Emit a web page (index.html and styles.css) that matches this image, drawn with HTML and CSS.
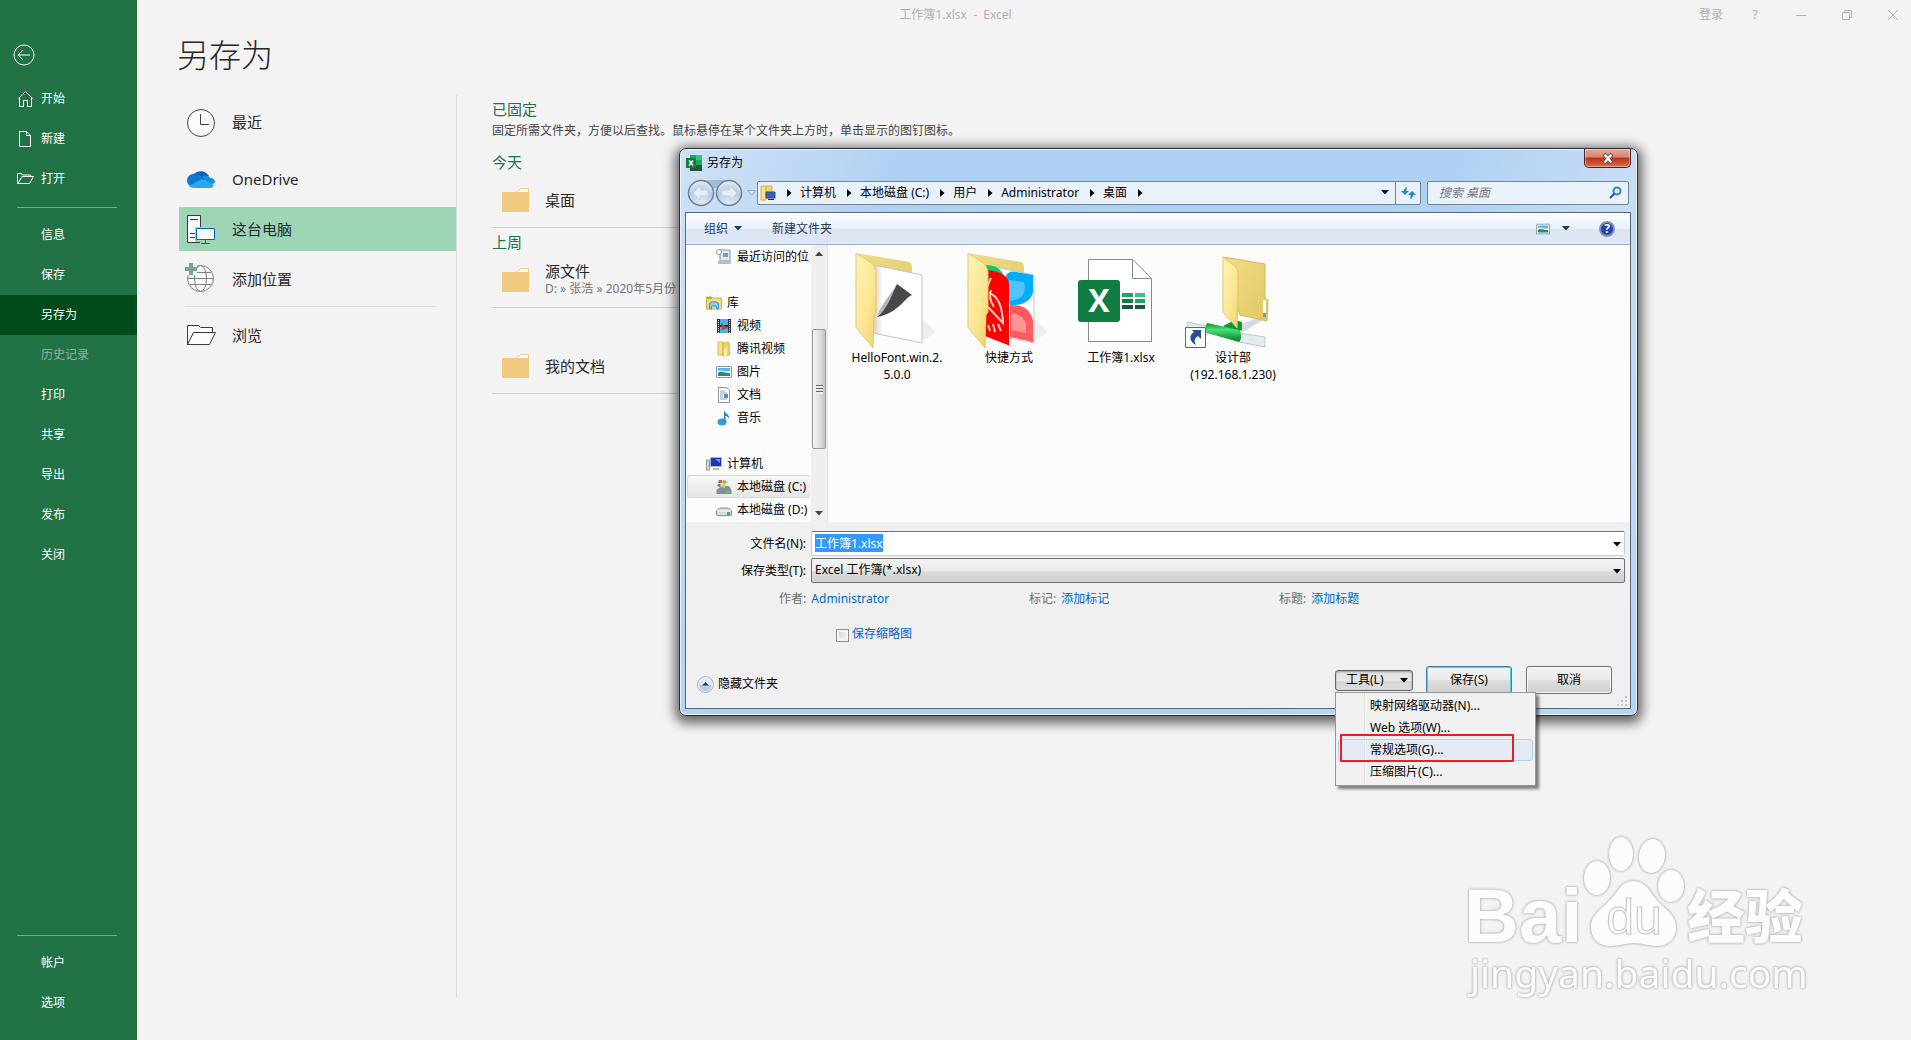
FILE: index.html
```html
<!DOCTYPE html>
<html lang="zh-CN">
<head>
    <meta charset="UTF-8">
    <meta name="viewport" content="width=device-width, initial-scale=1.0">
    <title>工作簿1.xlsx - Excel</title>
    <link rel="stylesheet" href="styles.css">
</head>
<body>
    <!-- Shared icons -->
    <svg class="defs" width="0" height="0">
        <defs>
            <linearGradient id="flap" x1="0" y1="0" x2="1" y2="1">
                <stop offset="0" stop-color="#fff3b8"/>
                <stop offset="0.6" stop-color="#fbe690"/>
                <stop offset="1" stop-color="#efd06a"/>
            </linearGradient>
            <linearGradient id="folderBack" x1="0" y1="0" x2="1" y2="1">
                <stop offset="0" stop-color="#f0dc88"/>
                <stop offset="1" stop-color="#e3c765"/>
            </linearGradient>
            <linearGradient id="paper" x1="0" y1="0" x2="1" y2="0">
                <stop offset="0" stop-color="#d6ccba"/>
                <stop offset="0.2" stop-color="#ffffff"/>
            </linearGradient>
            <linearGradient id="pipe" x1="0" y1="0" x2="0" y2="1">
                <stop offset="0" stop-color="#0b8a2f"/>
                <stop offset="0.35" stop-color="#4be07a"/>
                <stop offset="1" stop-color="#057a25"/>
            </linearGradient>
            <radialGradient id="orb" cx="0.5" cy="0.9" r="0.9">
                <stop offset="0" stop-color="#dfeaf5"/>
                <stop offset="0.6" stop-color="#b9cee3"/>
                <stop offset="1" stop-color="#e8f0f8"/>
            </radialGradient>
            <symbol id="i-down" viewBox="0 0 8 5"><path d="M0 0h8L4 4.500z" fill="currentColor"/></symbol>
            <symbol id="i-right" viewBox="0 0 5 8"><path d="M0 0v8L4.500 4z" fill="currentColor"/></symbol>
            <symbol id="i-folder" viewBox="0 0 28 26">
                <path d="M14 5l5-3.500h7.500V6H14z" fill="#fff" stroke="#efc980"/>
                <path d="M0 5h27v20H0z" fill="#efc980"/>
            </symbol>
            <symbol id="i-picture" viewBox="0 0 16 16">
                <path d="M.5 2.500h15v11H.5z" fill="#fff" stroke="#8a97a5"/>
                <path d="M2 4h12v4H2z" fill="#57b4ee"/>
                <path d="M2 7c3-2 5 1 12 0v3H2z" fill="#dff0e8"/>
                <path d="M2 9c4-3 7 1 12 0v3H2z" fill="#2c8a72"/>
            </symbol>
            <symbol id="i-smallfolder" viewBox="0 0 16 16">
                <path d="M2 1h5v13H2z" fill="#f7e08b" stroke="#dcb94f"/>
                <path d="M7 2l6-.5.500 12.500L7 15z" fill="#f0d06a" stroke="#d9b24a"/>
                <path d="M8 8l3-2v9H8z" fill="#fbeeb0"/>
            </symbol>
        </defs>
    </svg>

    <nav class="sidebar">
        <button class="back-btn" aria-label="返回">
            <svg width="22" height="22" viewBox="0 0 22 22" fill="none" stroke="#fff"><circle cx="11" cy="11" r="10"/><path d="M17 11H5M10 6l-5 5 5 5"/></svg>
        </button>
        <a class="nav-item" href="#">
            <svg class="nav-icon" viewBox="0 0 18 18" fill="none" stroke="#fff"><path d="M1 9l7.500-7.500L16 9M2.500 8v8.500h4v-6h4v6h4V8"/></svg>开始</a>
        <a class="nav-item" href="#">
            <svg class="nav-icon" viewBox="0 0 18 18" fill="none" stroke="#fff"><path d="M2.500 1.500h7l4 4v11h-11zM9.500 1.500v4h4"/></svg>新建</a>
        <a class="nav-item" href="#">
            <svg class="nav-icon" viewBox="0 0 18 18" fill="none" stroke="#fff"><path d="M.5 13.500V3.500h4l1 1.500h8v1.500M1 13.500L5 6.500h11.500l-4 7z"/></svg>打开</a>
        <hr>
        <a class="nav-item text-only" href="#">信息</a>
        <a class="nav-item text-only" href="#">保存</a>
        <a class="nav-item text-only active" href="#">另存为</a>
        <a class="nav-item text-only disabled" href="#">历史记录</a>
        <a class="nav-item text-only" href="#">打印</a>
        <a class="nav-item text-only" href="#">共享</a>
        <a class="nav-item text-only" href="#">导出</a>
        <a class="nav-item text-only" href="#">发布</a>
        <a class="nav-item text-only" href="#">关闭</a>
        <div class="nav-bottom">
            <hr>
            <a class="nav-item text-only" href="#">帐户</a>
            <a class="nav-item text-only" href="#">选项</a>
        </div>
    </nav>

    <main class="main">
        <header class="app-titlebar">
            <span class="app-title">工作簿1.xlsx&nbsp; -&nbsp; Excel</span>
            <div class="window-controls">
                <a class="login" href="#">登录</a>
                <button aria-label="帮助">?</button>
                <button aria-label="最小化"><svg width="12" height="12" viewBox="0 0 12 12" fill="none" stroke="#b1b1b1"><path d="M1 6.500h10"/></svg></button>
                <button aria-label="还原"><svg width="12" height="12" viewBox="0 0 12 12" fill="none" stroke="#b1b1b1"><path d="M1.500 3.500h7v7h-7zM3.500 3.500v-2h7v7h-2"/></svg></button>
                <button aria-label="关闭窗口"><svg width="12" height="12" viewBox="0 0 12 12" fill="none" stroke="#b1b1b1"><path d="M1 1l10 10M11 1L1 11"/></svg></button>
            </div>
        </header>

        <h1>另存为</h1>

        <div class="columns">
            <div class="places">
                <a class="place first" href="#">
                    <svg width="32" height="32" viewBox="0 0 32 32" fill="none" stroke="#444"><circle cx="16" cy="17" r="13.500" fill="#fafafa"/><path d="M15.500 8v10.500H24"/></svg>
                    最近</a>
                <a class="place" href="#">
                    <svg width="32" height="32" viewBox="0 0 32 32">
                        <path d="M9 11a9 8 0 0 1 15 2l-6 5z" fill="#0364b8"/>
                        <path d="M8 24a6 6.500 0 0 1 0-13c3-1 6 1 9 3l4 8z" fill="#0f78d4"/>
                        <path d="M17 14c4-3 7-1 8 1 4 0 5 2 5 5l-6 2z" fill="#1490df"/>
                        <path d="M4 23l13-7 12 6c-1 2-2 3-4 3H9c-2 0-4-1-5-2z" fill="#28a8ea"/>
                    </svg>
                    OneDrive</a>
                <a class="place selected" href="#">
                    <svg width="32" height="32" viewBox="0 0 32 32" fill="none">
                        <path d="M2.500 2.500h13v27h-13z" fill="#fafafa" stroke="#3a3a3a"/><path d="M5 6.500h8M5 20.500h5M5 24.500h5" stroke="#3a3a3a"/>
                        <path d="M10 14h21v18H15v-3h-5z" fill="#9fd5b7"/>
                        <path d="M11.500 15.500h18v11h-18z" fill="#fafafa" stroke="#0364b8"/><path d="M20.500 27v3M16 30.500h9" stroke="#0364b8"/>
                    </svg>
                    这台电脑</a>
                <a class="place" href="#">
                    <svg width="32" height="32" viewBox="0 0 32 32" fill="none" stroke="#808080">
                        <circle cx="15.500" cy="15.500" r="13" fill="#fafafa"/><ellipse cx="15.500" cy="15.500" rx="6" ry="13"/><path d="M2.500 15.500h26M5 9.500h21M5 21.500h21"/>
                        <path d="M0 0h12v12H0z" fill="#f3f3f3" stroke="none"/>
                        <path d="M6 0v12M0 6h12" stroke="#73a896" stroke-width="4"/>
                    </svg>
                    添加位置</a>
                <hr>
                <a class="place" href="#">
                    <svg width="32" height="32" viewBox="0 0 32 32" fill="#fafafa" stroke="#3a3a3a"><path d="M2.500 26V6.500h11l2 2h12v5"/><path d="M2.500 25.500l6-12h22l-6 12z"/></svg>
                    浏览</a>
            </div>

            <div class="recent">
                <h2>已固定</h2>
                <p class="hint">固定所需文件夹，方便以后查找。鼠标悬停在某个文件夹上方时，单击显示的图钉图标。</p>
                <h2>今天</h2>
                <a class="folder-row" href="#">
                    <svg width="28" height="26"><use href="#i-folder"/></svg>
                    <span>桌面</span></a>
                <h2>上周</h2>
                <a class="folder-row" href="#">
                    <svg width="28" height="26"><use href="#i-folder"/></svg>
                    <span>源文件<small>D: » 张浩 » 2020年5月份</small></span></a>
                <a class="folder-row spaced" href="#">
                    <svg width="28" height="26"><use href="#i-folder"/></svg>
                    <span>我的文档</span></a>
            </div>
        </div>
    </main>

    <div class="dialog" role="dialog" aria-labelledby="dialogTitle">
        <div class="dialog-title">
            <svg width="16" height="16" viewBox="0 0 16 16">
                <path d="M4 0h6v5H4z" fill="#21a366"/><path d="M10 0h6v5h-6z" fill="#33c481"/>
                <path d="M4 5h6v5H4z" fill="#107c41"/><path d="M10 5h6v5h-6z" fill="#21a366"/><path d="M4 10h12v6H4z" fill="#185c37"/>
                <path d="M0 3h10v10H0z" fill="#107c41"/><path d="M3 5.500l4 5M7 5.500l-4 5" stroke="#fff" stroke-width="1.500"/>
            </svg>
            <span id="dialogTitle">另存为</span>
            <button class="close-btn" aria-label="关闭">
                <svg width="12" height="11" viewBox="0 0 12 11"><path d="M2 1l8 9M10 1L2 10" stroke="#5b3a3a" stroke-width="4"/><path d="M2.500 1.500l7 8M9.500 1.500l-7 8" stroke="#fff" stroke-width="2.500"/></svg>
            </button>
        </div>

        <div class="address-row">
            <div class="travel">
                <svg width="56" height="28" viewBox="0 0 56 28">
                    <path d="M13 1h30v8H13z" fill="#a3bdd8"/>
                    <circle cx="14" cy="14" r="12.500" fill="url(#orb)" stroke="#6c8096" stroke-width="1.500"/>
                    <circle cx="42" cy="14" r="12.500" fill="url(#orb)" stroke="#6c8096" stroke-width="1.500"/>
                    <path d="M6 14l7-7v4h8v6h-8v4z" fill="#e6eff8" stroke="#c2d3e4"/>
                    <path d="M50 14l-7-7v4h-8v6h8v4z" fill="#e6eff8" stroke="#c2d3e4"/>
                </svg>
                <svg width="9" height="6" viewBox="0 0 9 6"><path d="M.5.500h8l-4 4.500z" fill="#dbe8f6" stroke="#8fa9c6"/></svg>
            </div>
            <div class="address">
                <svg width="16" height="16" viewBox="0 0 16 16"><path d="M1 1h5v14H1z" fill="#f7e08b" stroke="#d9b24a"/><path d="M6 1h6v12H6z" fill="#f2d676" stroke="#d9b24a"/><path d="M6 7h9v6H6z" fill="#2467c9" stroke="#41506b"/><path d="M8 14h6v1H8z" fill="#333"/></svg>
                <svg class="crumb-arrow" width="5" height="8"><use href="#i-right"/></svg>
                <span>计算机</span>
                <svg class="crumb-arrow" width="5" height="8"><use href="#i-right"/></svg>
                <span>本地磁盘 (C:)</span>
                <svg class="crumb-arrow" width="5" height="8"><use href="#i-right"/></svg>
                <span>用户</span>
                <svg class="crumb-arrow" width="5" height="8"><use href="#i-right"/></svg>
                <span>Administrator</span>
                <svg class="crumb-arrow" width="5" height="8"><use href="#i-right"/></svg>
                <span>桌面</span>
                <svg class="crumb-arrow" width="5" height="8"><use href="#i-right"/></svg>
                <svg class="address-drop" width="8" height="5"><use href="#i-down"/></svg>
                <button class="refresh" aria-label="刷新">
                    <svg width="15" height="14" viewBox="0 0 15 14"><path d="M6 1C4 1.500 3 3 3 5H0l4 4 4-4H5.500C5.500 3 5.500 2 6 1zM9 13c2-.5 3-2 3-4h3l-4-4-4 4h2.500c0 2 0 3-.5 4z" fill="#2f7fd0"/></svg>
                </button>
            </div>
            <div class="search">
                <input type="text" placeholder="搜索 桌面" aria-label="搜索 桌面">
                <svg width="13" height="13" viewBox="0 0 13 13" fill="none"><circle cx="8" cy="5" r="3.500" stroke="#2f86d4" stroke-width="2"/><path d="M5.500 7.500L1 12" stroke="#2a4fa3" stroke-width="2"/></svg>
            </div>
        </div>

        <div class="client">
            <div class="toolbar">
                <button>组织 <svg width="8" height="5"><use href="#i-down"/></svg></button>
                <button>新建文件夹</button>
                <button class="view-btn" aria-label="更改视图"><svg width="14" height="14"><use href="#i-picture"/></svg><svg width="8" height="5"><use href="#i-down"/></svg></button>
                <button aria-label="获取帮助" class="help-btn">?</button>
            </div>

            <div class="browser">
                <div class="tree">
                    <a class="node child" href="#"><svg viewBox="0 0 16 16"><path d="M4 1h10v11H4z" fill="#e4e8ec" stroke="#8d979f"/><path d="M7 4h5v4H7z" fill="#5aa6e0"/><path d="M2 12h13v3H2z" fill="#b9bfc4"/><circle cx="3" cy="3" r="2.500" fill="#fff" stroke="#8d979f"/></svg>最近访问的位置</a>
                    <a class="node group" href="#"><svg viewBox="0 0 16 16"><path d="M.5 2h5l1 1h9v11H.5z" fill="#f3da80" stroke="#cfae4c"/><path d="M1 2h5v2H1z" fill="#7cc243"/><path d="M3.500 14V9c0-3 9-3 9 0v5h-2v-3h-5v3z" fill="#8fd0f2" stroke="#3f94c8"/></svg>库</a>
                    <a class="node child" href="#"><svg viewBox="0 0 16 16"><path d="M1 1h14v14H1z" fill="#2b2f38"/><path d="M4 1h8v6H4z" fill="#4bb3ea"/><path d="M4 9h8v6H4z" fill="#4bb3ea"/><path d="M5 5l7 5-6 2z" fill="#b5473a"/><path d="M2.500 2v13M13.500 2v13" stroke="#fff" stroke-dasharray="1 1"/></svg>视频</a>
                    <a class="node child" href="#"><svg><use href="#i-smallfolder"/></svg>腾讯视频</a>
                    <a class="node child" href="#"><svg><use href="#i-picture"/></svg>图片</a>
                    <a class="node child" href="#"><svg viewBox="0 0 16 16"><path d="M2.500.500h8l3 3v12h-11z" fill="#fff" stroke="#8a97a5"/><path d="M4 4h5M4 6h7M4 8h3M4 10h3M4 12h7" stroke="#8ea2b8"/><path d="M8 7h4v4H8z" fill="#4a90c8"/></svg>文档</a>
                    <a class="node child" href="#"><svg viewBox="0 0 16 16"><ellipse cx="6" cy="12" rx="4.500" ry="3.500" fill="#2f9ce0"/><path d="M8 12V0c1 4 6 4 5 9-1-3-3-3-3.500-3v6z" fill="#2487cf"/></svg>音乐</a>
                    <a class="node group" href="#"><svg viewBox="0 0 16 16"><path d="M.5 4h3v10h-3z" fill="#d8dde2" stroke="#8a939c"/><path d="M4.500 1.500h11v9h-11z" fill="#1638b8" stroke="#b3bac4"/><path d="M9 3h5v4z" fill="#6f95f0"/><path d="M7 12h6v2H7z" fill="#b3bac4"/></svg>计算机</a>
                    <a class="node child current" href="#"><svg viewBox="0 0 16 16"><path d="M3 9l2-2h8l2.500 4v4H.5v-4z" fill="#7a929c"/><path d="M10 12h4v2h-4z" fill="#42d33a"/><path d="M3 1h3v3H2z" fill="#e8542c"/><path d="M7 1l4 1-1 3-4-1z" fill="#7cc243"/><path d="M2 5h3l-1 3-3-1z" fill="#2c8de0"/><path d="M6 5l4 1-1 3-4-1z" fill="#f7c431"/></svg>本地磁盘 (C:)</a>
                    <a class="node child" href="#"><svg viewBox="0 0 16 16"><path d="M.5 9l3-3h9l3 3v4c0 1-15 1-15 0z" fill="#d8dadd" stroke="#83888e"/><path d="M1 9h14" stroke="#fff"/><path d="M11 10h3v3h-3z" fill="#3db93a"/></svg>本地磁盘 (D:)</a>
                </div>
                <div class="scrollbar">
                    <svg class="sb-up" width="8" height="5"><use href="#i-down"/></svg>
                    <div class="thumb"></div>
                    <svg class="sb-down" width="8" height="5"><use href="#i-down"/></svg>
                </div>
                <div class="files">
                    <a class="file" href="#">
                        <svg viewBox="0 0 96 96">
                            <path d="M73 88l14-9-14-14z" fill="#eee"/>
                            <path d="M7 0l53 9q3 1 3 5v60H7z" fill="url(#folderBack)"/>
                            <path d="M25 12l48 10v68L24 80z" fill="url(#paper)" stroke="#c4c4c4"/>
                            <path d="M28 63c7-16 13-20 20-32-2 12-9 24-20 32z" fill="#b5b5b5"/>
                            <path d="M48 31l15 11c-8 3-13 18-35 22 10-8 14-20 20-33z" fill="#48484a"/>
                            <path d="M7 0l17 11 3 7v41l-2 3-1 33L7 74z" fill="url(#flap)" stroke="#e3c765"/>
                        </svg>
                        <span>HelloFont.win.2.<br>5.0.0</span></a>
                    <a class="file" href="#">
                        <svg viewBox="0 0 96 96">
                            <path d="M73 88l14-9-14-14z" fill="#eee"/>
                            <path d="M7 0l53 9q3 1 3 5v60H7z" fill="url(#folderBack)"/>
                            <path d="M25 12l48 10v68L24 80z" fill="#fff" stroke="#c4c4c4"/>
                            <path d="M45 22q4-5 10-3l17 3v18q-4 13-23 12z" fill="#00aeff"/><path d="M48 27l15 2q4 14-9 18l-6 1z" fill="#4fc6ff"/>
                            <path d="M49 52q20-1 23 16v21l-23-5z" fill="#ff5a5f"/><path d="M50 60q13 2 15 11v9l-15-3z" fill="#ff9494"/>
                            <path d="M24 12q15 0 18 10H26z" fill="#00d062"/>
                            <path d="M26 17q22 2 22 15v60l4 2-28-11z" fill="#fe0000"/>
                            <path d="M26 34l4-9M28 40q13 4 14 30L27 54M30 37q-3 8 3 17M27 72l2 6M32 71l2 8M37 71l3 7" fill="none" stroke="#f6c9c2" stroke-width="2"/>
                            <path d="M7 0l17 11 3 7v41l-2 3-1 33L7 74z" fill="url(#flap)" stroke="#e3c765"/>
                        </svg>
                        <span>快捷方式</span></a>
                    <a class="file" href="#">
                        <svg viewBox="0 0 96 96">
                            <path d="M15.500 6.500H60l18.500 19v63h-63z" fill="#fff" stroke="#8a8a8a"/><path d="M59.500 6.500v19h19" fill="none" stroke="#8a8a8a"/>
                            <path d="M49 40h11v4H49z" fill="#21a366"/><path d="M62 40h10v4H62z" fill="#33c481"/>
                            <path d="M49 46h11v4H49z" fill="#107c41"/><path d="M62 46h10v4H62z" fill="#21a366"/>
                            <path d="M49 52h11v4H49zM62 52h10v4H62z" fill="#185c37"/>
                            <rect x="5" y="27" width="42" height="42" rx="3" fill="#107c41"/>
                            <text class="xl-letter" x="26" y="59">X</text>
                        </svg>
                        <span>工作簿1.xlsx</span></a>
                    <a class="file" href="#">
                        <svg viewBox="0 0 96 96">
                            <path d="M50 74l24-10 4 3-20 12z" fill="#d5dcdf"/>
                            <path d="M38 4l42 7v35l3 1-1 21-27-6z" fill="url(#folderBack)" stroke="#d6b852"/>
                            <path d="M78 47h3v17h-3z" fill="#fff"/><path d="M78 60h3v4h-3z" fill="#5a9bdc"/>
                            <path d="M2 69l20 4v9L2 77z" fill="#e3ebee" stroke="#bcc9cf"/>
                            <path d="M54 80l26 4v10l-26-5z" fill="#e3ebee" stroke="#bcc9cf"/>
                            <path d="M38 73l12-6 7 2v8l-8 3z" fill="#0d9a36"/>
                            <path d="M22 70l32 7c3 3 3 9 0 12l-32-9c-2-3-2-7 0-10z" fill="url(#pipe)"/>
                            <path d="M38 4l13 10 2 5v28l-1 28-14-16z" fill="url(#flap)" stroke="#e3c765"/>
                            <path d="M.5 74.500h20v20H.5z" fill="#fff" stroke="#666"/>
                            <path d="M7 77h9v9l-3-3c-4 3-4 5-2 9-6-3-8-9-2-13z" fill="#1f4f9c"/>
                        </svg>
                        <span>设计部<br>(192.168.1.230)</span></a>
                </div>
            </div>

            <form class="save-form">
                <div class="field">
                    <label for="fileName">文件名(N):</label>
                    <div class="combo"><input type="text" id="fileName" value="工作簿1.xlsx"><svg width="8" height="5"><use href="#i-down"/></svg></div>
                </div>
                <div class="field">
                    <label for="fileType">保存类型(T):</label>
                    <div class="combo"><select id="fileType"><option>Excel 工作簿(*.xlsx)</option></select><svg width="8" height="5"><use href="#i-down"/></svg></div>
                </div>
                <div class="meta">
                    <span>作者: <a href="#">Administrator</a></span>
                    <span>标记: <a href="#">添加标记</a></span>
                    <span>标题: <a href="#">添加标题</a></span>
                </div>
                <div class="thumb-check">
                    <input type="checkbox" id="saveThumb"><label for="saveThumb">保存缩略图</label>
                </div>
                <div class="dialog-footer">
                    <button type="button" class="hide-folders">
                        <svg width="17" height="17" viewBox="0 0 17 17"><circle cx="8.500" cy="8.500" r="8" fill="#e6ecf5" stroke="#a9b4cf"/><path d="M2 9h13a6.500 6.500 0 0 1-13 0z" fill="#c3cdda"/><path d="M5 9.500h7L8.500 6z" fill="#1d3f95"/></svg>
                        隐藏文件夹</button>
                    <div class="tools">
                        <button type="button" class="tools-btn">工具(L) <svg width="8" height="5"><use href="#i-down"/></svg></button>
                        <div class="menu">
                            <button type="button">映射网络驱动器(N)...</button>
                            <button type="button">Web 选项(W)...</button>
                            <button type="button" class="hot">常规选项(G)...</button>
                            <button type="button">压缩图片(C)...</button>
                            <div class="marker"></div>
                        </div>
                    </div>
                    <button type="button" class="btn primary">保存(S)</button>
                    <button type="button" class="btn">取消</button>
                </div>
                <svg class="grip" width="10" height="10" viewBox="0 0 10 10" fill="#c4c4c4"><path d="M8 0h2v2H8zM4 4h2v2H4zM8 4h2v2H8zM0 8h2v2H0zM4 8h2v2H4zM8 8h2v2H8z"/></svg>
            </form>
        </div>
    </div>

    <!-- Watermark -->
    <svg class="watermark" width="360" height="180" viewBox="0 0 360 180">
        <g class="wm">
            <text class="wm-bai" x="4" y="112">Bai</text>
            <ellipse cx="137" cy="48" rx="13" ry="17"/>
            <ellipse cx="161" cy="24" rx="12" ry="17"/>
            <ellipse cx="192" cy="26" rx="13" ry="17" transform="rotate(8 192 26)"/>
            <ellipse cx="211" cy="56" rx="13" ry="16"/>
            <path d="M173 51c12 0 16 9 22 17 8 10 21 16 21 29 0 14-10 19-20 19-8 0-14-3-22-3s-14 3-24 3c-11 0-19-7-19-19 0-13 12-19 21-29 7-8 10-17 21-17z"/>
            <text class="wm-du" x="174" y="104">du</text>
            <text class="wm-cn" x="227" y="108">经验</text>
            <text class="wm-url" x="10" y="158">jingyan.baidu.com</text>
        </g>
    </svg>

    <script>
        // file name starts focused with its text selected
        const fileName = document.getElementById('fileName');
        fileName.focus();
        fileName.select();
    </script>
</body>
</html>
```

FILE: styles.css
```css
* {
    box-sizing: border-box;
}

body {
    margin: 0;
    min-height: 100vh;
    display: flex;
    background: #f3f3f3;
    color: #262626;
    font-family: "Noto Sans", "Noto Sans CJK SC", sans-serif;
    font-size: 12px;
    line-height: 18px;
    overflow: hidden;
}

a {
    color: inherit;
    text-decoration: none;
}

button {
    font: inherit;
    color: inherit;
    background: none;
    border: none;
    padding: 0;
}

svg {
    flex: none;
}

.defs {
    position: absolute;
}

/* Green backstage menu */
.sidebar {
    width: 137px;
    flex: none;
    display: flex;
    flex-direction: column;
    background: #217346;
    color: #fff;
    padding-bottom: 17px;
}

.sidebar hr {
    width: 100px;
    margin: 8px 17px 7px;
    border: none;
    border-top: 1px solid #6fae8a;
}

.back-btn {
    height: 79px;
    padding: 44px 0 0 13px;
    display: flex;
    align-items: flex-start;
}

.nav-item {
    height: 40px;
    padding-left: 17px;
    display: flex;
    align-items: center;
    gap: 6px;
}

.nav-icon {
    width: 18px;
    height: 18px;
}

.text-only {
    padding-left: 41px;
}

.active {
    background: #004b1c;
}

.disabled {
    color: #a0a8a2;
}

.nav-bottom {
    margin-top: auto;
}

/* Main area */
.main {
    flex: 1;
    display: flex;
    flex-direction: column;
    padding-bottom: 42px;
}

.app-titlebar {
    margin-left: -137px;
    height: 30px;
    display: grid;
    grid-template-columns: 1fr auto 1fr;
    align-items: center;
    color: #b1b1b1;
}

.app-title {
    grid-column: 2;
}

.window-controls {
    display: flex;
    justify-content: flex-end;
    align-items: center;
    gap: 32px;
    padding-right: 11px;
}

.window-controls button {
    width: 14px;
    display: flex;
    justify-content: center;
}

.login {
    margin-right: -7px;
}

h1 {
    margin: 1px 0 16px 40px;
    font-size: 32px;
    line-height: 48px;
    font-weight: 300;
}

.columns {
    flex: 1;
    display: flex;
    padding-left: 42px;
}

.places {
    width: 278px;
    flex: none;
    padding-top: 5px;
    border-right: 1px solid #dedede;
    font-size: 15px;
}

.place {
    height: 44px;
    margin-bottom: 6px;
    padding-left: 6px;
    display: flex;
    align-items: center;
    gap: 15px;
}

.place.first {
    margin-bottom: 13px;
}

.place.selected {
    background: #9fd5b7;
}

.places hr {
    margin: -1px 20px 6px 6px;
    border: none;
    border-top: 1px solid #dedede;
}

.recent {
    flex: 1;
    max-width: 1000px;
    padding: 4px 0 0 35px;
}

.recent h2 {
    margin: 4px 0 0;
    font-size: 15px;
    line-height: 20px;
    font-weight: 400;
    color: #217346;
}

.recent h2:first-child {
    margin-top: 0;
}

.hint {
    margin: 3px 0 12px;
    color: #444;
}

.folder-row {
    height: 56px;
    padding-left: 10px;
    display: flex;
    align-items: center;
    gap: 15px;
    border-bottom: 1px solid #d0d0d0;
    font-size: 15px;
}

.folder-row small {
    display: block;
    font-size: 12px;
    color: #737373;
}

.spaced {
    margin-top: 30px;
}

/* Save As window */
.dialog {
    position: absolute;
    left: 679px;
    top: 148px;
    width: 959px;
    padding: 0 6px 6px 5px;
    border: 1px solid #2a2f36;
    border-radius: 7px;
    background: linear-gradient(110deg, #cfe2f6 0, #bfd9f3 120px, #aed0f2 220px, #aed0f2 720px, #c6ddf5 900px, #b4d3f3);
    box-shadow: inset 0 0 0 1px #eaf4fd, 0 3px 12px 4px rgba(0, 0, 0, 0.6);
    color: #000;
}

.dialog-title {
    height: 28px;
    display: flex;
    align-items: center;
    gap: 5px;
    padding-left: 1px;
}

.close-btn {
    width: 47px;
    height: 19px;
    margin-left: auto;
    align-self: flex-start;
    display: flex;
    justify-content: center;
    align-items: center;
    border: 1px solid #4a2020;
    border-top: none;
    border-radius: 0 0 5px 5px;
    background: linear-gradient(#e8a99c, #d98373 45%, #bd2f16 50%, #d9714d);
    box-shadow: inset 0 0 0 1px rgba(255, 255, 255, 0.4);
}

.address-row {
    height: 35px;
    padding: 0 2px 4px 0;
    display: flex;
    align-items: center;
}

.travel {
    width: 72px;
    display: flex;
    align-items: center;
    gap: 4px;
    padding-left: 2px;
}

.address,
.search {
    height: 24px;
    display: flex;
    align-items: center;
    border: 1px solid #6f8399;
    border-radius: 2px;
    background: #e9f1fb;
}

.address {
    flex: 1;
    padding-left: 2px;
}

.crumb-arrow {
    margin: 0 8px 0 11px;
}

.address-drop {
    margin: 0 6px 0 auto;
    color: #00005a;
}

.refresh {
    width: 25px;
    height: 22px;
    display: flex;
    justify-content: center;
    align-items: center;
    border-left: 1px solid #6f8399;
}

.search {
    width: 202px;
    margin-left: 6px;
    padding: 0 6px 0 9px;
}

.search input {
    flex: 1;
    min-width: 0;
    border: none;
    background: none;
    font: inherit;
    font-style: italic;
}

.search input::placeholder {
    color: #777;
}

.client {
    border: 1px solid #56677a;
    background: #f0f0f0;
}

.toolbar {
    height: 32px;
    padding: 0 15px 0 18px;
    display: flex;
    align-items: center;
    border-bottom: 1px solid #a0afc8;
    background: linear-gradient(#fbfdff, #e9f1fb 50%, #dce6f4 51%, #dce6f4);
    color: #1e395b;
}

.toolbar button {
    display: flex;
    align-items: center;
    gap: 6px;
    margin-right: 30px;
}

.toolbar .view-btn {
    margin-left: auto;
    gap: 12px;
    margin-right: 29px;
}

.toolbar .help-btn {
    width: 16px;
    height: 16px;
    margin-right: 0;
    justify-content: center;
    border: 2px solid #8b93a8;
    border-radius: 50%;
    background: #2344b8;
    color: #fff;
    font-weight: 700;
}

.browser {
    height: 277px;
    display: flex;
    background: #fcfcfc;
}

.tree {
    width: 124px;
    overflow: hidden;
}

.node {
    height: 23px;
    padding-left: 20px;
    display: flex;
    align-items: center;
    gap: 5px;
    white-space: nowrap;
}

.node svg {
    width: 16px;
    height: 16px;
}

.child {
    padding-left: 30px;
}

.group {
    margin-top: 23px;
}

.node.current {
    border: 1px solid #d9d9d9;
    border-right: none;
    border-radius: 3px;
    margin-left: 1px;
    padding-left: 28px;
    background: linear-gradient(#f8f8f8, #e6e6e6);
}

.scrollbar {
    width: 16px;
    margin-left: 1px;
    padding: 6px 0;
    display: flex;
    flex-direction: column;
    align-items: center;
    background: #efefef;
    color: #444;
}

.sb-up {
    transform: rotate(180deg);
}

.thumb {
    width: 14px;
    height: 120px;
    margin-top: 73px;
    border: 1px solid #989898;
    border-radius: 2px;
    background:
        repeating-linear-gradient(#666 0 1px, #eee 1px 3px) center / 7px 9px no-repeat,
        linear-gradient(90deg, #f5f5f5, #e2e2e2 50%, #c3c3c3);
}

.sb-down {
    margin-top: auto;
}

.files {
    flex: 1;
    padding: 8px 0 0 13px;
    display: flex;
    border-left: 1px solid #d6e5f5;
}

.file {
    width: 112px;
    display: flex;
    flex-direction: column;
    align-items: center;
    text-align: center;
    line-height: 17px;
}

.file svg {
    width: 96px;
    height: 96px;
}

.xl-letter {
    font: 700 32px "Open Sans", sans-serif;
    fill: #fff;
    text-anchor: middle;
}

.save-form {
    position: relative;
    padding: 9px 5px 14px 0;
}

.field {
    display: flex;
    align-items: center;
    margin-bottom: 2px;
}

.field label {
    width: 120px;
    margin-right: 5px;
    text-align: right;
}

.combo {
    position: relative;
    flex: 1;
}

.combo input,
.combo select {
    display: block;
    width: 100%;
    height: 25px;
    padding: 0 3px 1px;
    font: inherit;
    color: #000;
    outline: none;
    border: 1px solid #b5cfe7;
    border-top-color: #3d7bad;
    border-radius: 2px;
    background: #fff;
}

.combo select {
    appearance: none;
    border: 1px solid #707070;
    background: linear-gradient(#f2f2f2, #ebebeb 50%, #dddddd 51%, #cfcfcf);
}

.combo input::selection {
    background: #3399ff;
    color: #fff;
}

.combo svg {
    position: absolute;
    right: 4px;
    top: 11px;
}

.meta {
    margin-top: 7px;
    padding-left: 93px;
    display: flex;
    color: #6d6d6d;
}

.meta span {
    width: 250px;
}

.meta a {
    margin-left: 2px;
    color: #0066cc;
}

.thumb-check {
    margin: 17px 0 23px 150px;
    display: flex;
    align-items: center;
    gap: 3px;
    color: #0066cc;
}

.thumb-check input {
    appearance: none;
    width: 13px;
    height: 13px;
    margin: 2px 0 0;
    border: 1px solid #8e8f8f;
    background: linear-gradient(135deg, #cfd3d8, #fafafa);
    box-shadow: inset 0 0 0 2px #f4f4f4;
}

.dialog-footer {
    height: 28px;
    padding: 0 13px 0 11px;
    display: flex;
    align-items: center;
}

.hide-folders {
    margin: 8px auto 0 0;
    display: flex;
    align-items: center;
    gap: 4px;
}

.btn {
    width: 86px;
    height: 28px;
    margin-left: 14px;
    border: 1px solid #707070;
    border-radius: 3px;
    background: linear-gradient(#f2f2f2, #ebebeb 50%, #dddddd 51%, #cfcfcf);
    box-shadow: inset 0 0 0 1px #fafafa;
}

.btn.primary {
    margin-left: 13px;
    border-color: #3c7fb1;
    box-shadow: inset 0 0 0 1px #48d1f7;
}

.tools {
    position: relative;
}

.tools-btn {
    width: 78px;
    height: 21px;
    padding: 0 4px 0 10px;
    display: flex;
    align-items: center;
    justify-content: space-between;
    border: 1px solid #666;
    border-radius: 3px;
    background: linear-gradient(#e0e0e0, #e8e8e8 50%, #d6d6d6 51%, #dcdcdc);
    box-shadow: inset 0 1px 2px #999;
}

.menu {
    position: absolute;
    z-index: 1;
    left: 0;
    top: 100%;
    width: 201px;
    margin-top: 1px;
    padding: 2px;
    border: 1px solid #979797;
    background: linear-gradient(90deg, #f1f1f1 28px, #e0e0e0 28px, #e0e0e0 29px, #fff 29px, #fff 30px, #f1f1f1 30px);
    box-shadow: 3px 3px 3px rgba(0, 0, 0, 0.5);
}

.menu button {
    display: block;
    width: 100%;
    height: 22px;
    padding-left: 31px;
    border: 1px solid transparent;
    border-radius: 3px;
    text-align: left;
    line-height: 20px;
}

.menu .hot {
    border-color: #aecff7;
    background: rgba(222, 232, 247, 0.6);
}

/* red frame round the wanted entry */
.marker {
    position: absolute;
    left: 4px;
    top: 41px;
    width: 174px;
    height: 28px;
    border: 2px solid #ed1c24;
    border-radius: 1px;
}

.grip {
    position: absolute;
    right: 3px;
    bottom: 2px;
}

.watermark {
    position: absolute;
    right: 91px;
    bottom: 30px;
}

.wm {
    fill: #fcfcfc;
    filter: drop-shadow(0 0 1px #aaa) drop-shadow(0 0 1px #ccc);
}

.wm-bai {
    font: 700 76px "Liberation Sans", sans-serif;
}

.wm-du {
    font: 400 50px "Liberation Sans", sans-serif;
    text-anchor: middle;
    stroke: #c4c4c4;
}

.wm-cn {
    font: 900 58px "Noto Sans CJK SC", sans-serif;
}

.wm-url {
    font: 400 39px "Noto Sans", sans-serif;
}
```
